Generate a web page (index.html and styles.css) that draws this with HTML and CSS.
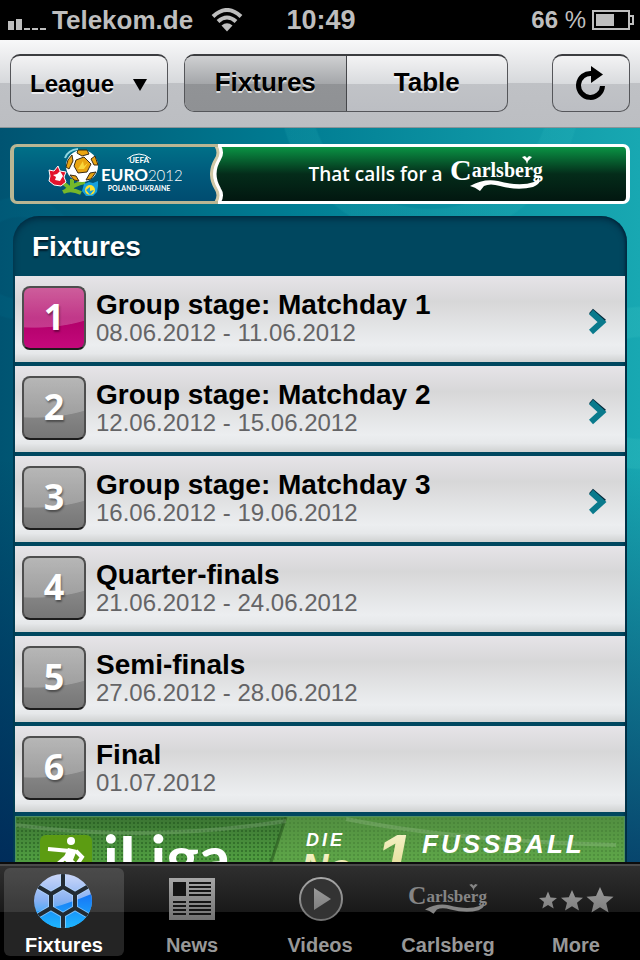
FILE: index.html
```html
<!DOCTYPE html>
<html lang="en">
<head>
  <meta charset="utf-8">
  <meta name="viewport" content="width=device-width">
  <title>Fixtures - Euro 2012</title>
  <link rel="stylesheet" href="styles.css">
</head>
<body>

  <div class="status-bar">
    <div class="carrier">
      <svg class="signal" width="38" height="12" viewBox="0 0 38 12">
        <path d="M0 3h6v9H0zM8 1h6v11H8zM16 10h6v2h-6zM24 10h6v2h-6zM32 10h6v2h-6z"/>
      </svg>
      <span>Telekom.de</span>
      <svg class="wifi" width="32" height="24" viewBox="0 0 32 24">
        <path class="arc" d="M2 8.500Q16 -4.500 30 8.500M7 13.500Q16 5.500 25 13.500"/>
        <path d="M16 23.500L10.500 17.500Q16 13 21.500 17.500Z"/>
      </svg>
    </div>
    <time>10:49</time>
    <div class="battery">
      <span>66 <span class="percent">%</span></span>
      <svg width="42" height="20" viewBox="0 0 42 20">
        <path class="shell" d="M1 1h36v18H1zM37 6h4v8h-4"/>
        <path d="M4 4h18v12H4z"/>
      </svg>
    </div>
  </div>

  <header class="toolbar">
    <div class="league">
      <select class="btn league-select" aria-label="League">
        <option>League</option>
        <option>Euro 2012</option>
      </select>
      <svg class="arrow" width="16" height="14" viewBox="0 0 16 14"><path d="M1 1h14L8 13z"/></svg>
    </div>
    <div class="segments">
      <button type="button" class="segment active">Fixtures</button>
      <button type="button" class="segment">Table</button>
    </div>
    <button type="button" class="btn refresh" aria-label="Refresh">
      <svg width="30" height="36" viewBox="0 0 30 36">
        <path class="ring" d="M16 8.500A12 12 0 1 0 26.500 21"/>
        <path d="M15 1l12 8.500L15 18z"/>
      </svg>
    </button>
  </header>

  <main class="content">
    <a href="#sponsor" class="banner">
      <span class="banner-left">
        <svg class="euro-logo" width="134" height="52" viewBox="0 0 134 52">
          <!-- flower stems -->
          <path d="M24 31L24 43M24 42L13 33M16 44Q26 36 37 34M15 44Q23 40 33 45" fill="none" stroke="#76b82a" stroke-width="4"/>
          <path d="M17 10Q20 2 30 1" fill="none" stroke="#8fd6e0" stroke-width="2"/>
          <!-- ball -->
          <circle cx="34" cy="18" r="16" fill="#fff"/>
          <path d="M28 12l8-3 7 7-4 8-9 1-4-7zM30 2l9 0 2 4-7 2-5-3zM47 8l3 9-4 0-3-6zM42 25l6-1-5 7-5 1zM20 12l4-5 1 6-4 8-3-2zM22 27l6 1 3 5-5-1z" fill="#e9a411" stroke="#3b2b14" stroke-width="1"/>
          <path d="M30 21l5-8 1 5 4-3-4 6z" fill="#f9d63c"/>
          <!-- red flower -->
          <path d="M1 22l5 1 4-5 2 5 6 1-2 5 2 5-5 4-7-1-5-4 1-5z" fill="#e3132c" stroke="#fff" stroke-width="1"/>
          <path d="M5 27l4-1 3-3 3 5-3 5-5-1 1-3z" fill="#fff"/>
          <!-- blue flower -->
          <path d="M36 36l5-2 4 1 5-2 0 5-1 6-4 4-7 0-4-5z" fill="#18a0dc"/>
          <circle cx="42" cy="42" r="5" fill="#ffe22e"/>
          <path d="M38 42l4-3 0 4 4-1-4 5z" fill="#18a0dc"/>
          <path d="M79 11Q91 1 103 11" fill="none" stroke="#fff" stroke-width="1"/>
          <text x="91" y="15" class="logo-uefa">UEFA</text>
          <text x="53" y="33" class="logo-euro">EURO<tspan class="logo-year">2012</tspan></text>
          <text x="91" y="43" class="logo-host">POLAND-UKRAINE</text>
        </svg>
      </span>
      <svg class="banner-edge" width="16" height="60" viewBox="0 0 16 60">
        <defs>
          <linearGradient id="green" x2="0" y2="1">
            <stop offset="0" stop-color="#0a9344"/>
            <stop offset=".5" stop-color="#042c1a"/>
            <stop offset="1" stop-color="#021710"/>
          </linearGradient>
          <linearGradient id="sea" x2="0" y2="1">
            <stop offset="0" stop-color="#007088"/>
            <stop offset=".5" stop-color="#005a7c"/>
            <stop offset="1" stop-color="#004c70"/>
          </linearGradient>
        </defs>
        <path d="M0 0h16v60H0z" fill="url(#sea)"/>
        <path d="M9 3Q13 9 8 15Q-1 30 8 45Q13 51 9 57H16V3Z" fill="url(#green)"/>
        <path d="M9 2Q13 9 9 15Q0 30 9 45Q13 51 9 58" fill="none" stroke="#fff" stroke-width="4"/>
        <path d="M6 2Q10 9 6 15Q-3 30 6 45Q10 51 6 58" fill="none" stroke="#d0c8a6" stroke-width="3"/>
        <path d="M0 0h8v3H0zM0 57h8v3H0z" fill="#b9b693"/>
        <path d="M8 0h8v3H8zM8 57h8v3H8z" fill="#fff"/>
      </svg>
      <span class="banner-right">
        <span>That calls for a</span>
        <svg width="94" height="38" viewBox="0 0 94 38" fill="#fff">
          <use href="#carlsberg"/>
        </svg>
      </span>
    </a>

    <section class="panel">
      <h1>Fixtures</h1>
      <ul class="rounds">
        <li>
          <a href="#matchday1" class="round">
            <span class="badge current">1</span>
            <span class="info"><strong>Group stage: Matchday 1</strong><span>08.06.2012 - 11.06.2012</span></span>
            <svg class="chevron" width="18" height="28" viewBox="0 0 18 28"><path class="shade" d="M2 3l13 11"/><path d="M2 4l11 10-11 10"/></svg>
          </a>
        </li>
        <li>
          <a href="#matchday2" class="round">
            <span class="badge">2</span>
            <span class="info"><strong>Group stage: Matchday 2</strong><span>12.06.2012 - 15.06.2012</span></span>
            <svg class="chevron" width="18" height="28" viewBox="0 0 18 28"><path class="shade" d="M2 3l13 11"/><path d="M2 4l11 10-11 10"/></svg>
          </a>
        </li>
        <li>
          <a href="#matchday3" class="round">
            <span class="badge">3</span>
            <span class="info"><strong>Group stage: Matchday 3</strong><span>16.06.2012 - 19.06.2012</span></span>
            <svg class="chevron" width="18" height="28" viewBox="0 0 18 28"><path class="shade" d="M2 3l13 11"/><path d="M2 4l11 10-11 10"/></svg>
          </a>
        </li>
        <li>
          <div class="round">
            <span class="badge">4</span>
            <span class="info"><strong>Quarter-finals</strong><span>21.06.2012 - 24.06.2012</span></span>
          </div>
        </li>
        <li>
          <div class="round">
            <span class="badge">5</span>
            <span class="info"><strong>Semi-finals</strong><span>27.06.2012 - 28.06.2012</span></span>
          </div>
        </li>
        <li>
          <div class="round">
            <span class="badge">6</span>
            <span class="info"><strong>Final</strong><span>01.07.2012</span></span>
          </div>
        </li>
      </ul>

      <a href="#iliga" class="ad">
        <svg class="ad-art" height="90" width="610" viewBox="0 0 610 90">
          <defs>
            <linearGradient id="cream" x2="0" y2="1">
              <stop offset="0" stop-color="#fbf8d4"/>
              <stop offset="1" stop-color="#d8cf7a"/>
            </linearGradient>
          </defs>
          <path d="M270 0H610V90H240z" fill="#6fb052" opacity=".45"/>
          <path d="M270 0L240 90" stroke="#28581f" stroke-width="3" opacity=".6"/>
          <path d="M0 8Q130 26 270 4M330 2Q440 24 600 28" fill="none" stroke="#fff" stroke-width="4" opacity=".13"/>
          <rect x="24" y="18" width="52" height="60" rx="6" fill="#5c9c12"/>
          <!-- player -->
          <circle cx="55" cy="24" r="4" fill="#fff"/>
          <path d="M32 32L54 34M60 34L66 40L60 49" fill="none" stroke="#fff" stroke-width="4"/>
          <path d="M52 31L61 33L57 43L64 49L58 52L47 42Z" fill="#fff"/>
          <path d="M50 40L36 52" stroke="#fff" stroke-width="4"/>
          <text x="87" y="63" class="ad-name">iLiga</text>
          <text x="290" y="29" class="ad-die">DIE</text>
          <text x="285" y="64" class="ad-no">No.</text>
          <text x="360" y="64" class="ad-one">1</text>
          <text x="406" y="36" class="ad-sport">FUSSBALL</text>
        </svg>
      </a>
    </section>
  </main>

  <nav class="tab-bar">
    <a href="#fixtures" class="tab selected">
      <svg width="60" height="60" viewBox="0 0 60 60">
        <defs>
          <linearGradient id="blue" x2="0" y2="1">
            <stop offset="0" stop-color="#d2dbfa"/>
            <stop offset=".5" stop-color="#86b0f2"/>
            <stop offset=".75" stop-color="#3ca8fa"/>
            <stop offset="1" stop-color="#20c4ff"/>
          </linearGradient>
          <linearGradient id="deep" x2="0" y2="1">
            <stop offset="0" stop-color="#1673f5"/>
            <stop offset="1" stop-color="#1ebcff"/>
          </linearGradient>
          <clipPath id="ball"><ellipse cx="29" cy="30" rx="29" ry="27"/></clipPath>
        </defs>
        <g clip-path="url(#ball)">
          <path d="M0 0h60v60H0z" fill="url(#blue)"/>
          <path d="M0 41Q28 36 60 22V60H0z" fill="url(#deep)"/>
          <path d="M29 16L41 23V37L29 44L17 37V23ZM29 16V0M41 23L60 12M41 37L60 48M29 44V60M17 37L-2 48M17 23L-2 12" fill="none" stroke="#b8dcff" stroke-width="6" opacity=".6"/>
          <path d="M29 16L41 23V37L29 44L17 37V23ZM29 16V0M41 23L60 12M41 37L60 48M29 44V60M17 37L-2 48M17 23L-2 12" fill="none" stroke="#222b33" stroke-width="4"/>
        </g>
      </svg>
      <span>Fixtures</span>
    </a>
    <a href="#news" class="tab">
      <svg width="60" height="60" viewBox="0 0 60 60">
        <defs>
          <linearGradient id="grey" gradientUnits="userSpaceOnUse" x1="0" y1="6" x2="0" y2="50">
            <stop offset="0" stop-color="#a8a8a8"/>
            <stop offset="1" stop-color="#717171"/>
          </linearGradient>
        </defs>
        <path d="M7 7h46v42H7z" fill="url(#grey)"/>
        <path d="M11 11h13v14H11zM27 11h22v2H27zM27 15h22v2H27zM27 19h22v2H27zM27 23h22v2H27zM11 30h13v2H11zM11 34h13v2H11zM11 38h13v2H11zM11 42h13v2H11zM27 30h22v2H27zM27 34h22v2H27zM27 38h22v2H27zM27 42h22v2H27z" fill="#151515"/>
      </svg>
      <span>News</span>
    </a>
    <a href="#videos" class="tab">
      <svg width="60" height="60" viewBox="0 0 60 60">
        <circle cx="31" cy="28" r="21" fill="#333" stroke="url(#grey)" stroke-width="2"/>
        <path d="M24 17L41 28L24 39z" fill="url(#grey)"/>
      </svg>
      <span>Videos</span>
    </a>
    <a href="#carlsberg-tab" class="tab">
      <svg width="80" height="60" viewBox="0 -14 94 70" fill="#858585">
        <g id="carlsberg">
          <text x="0" y="25" class="beer"><tspan class="beer-c">C</tspan><tspan dy="-3">arlsberg</tspan></text>
          <path d="M20 31Q34 23 48 26Q70 32 84 27Q88 25 88 22Q93 28 83 32Q68 36 50 31Q40 28 34 31L30 36Q25 32 20 31z"/>
          <path d="M76 6l-4-4 3-1 2 2 2-2 3 1-4 4-1 3z"/>
        </g>
      </svg>
      <span>Carlsberg</span>
    </a>
    <a href="#more" class="tab">
      <svg width="80" height="60" viewBox="0 0 80 60">
        <g fill="url(#grey)">
          <path d="M12 20.500l2.500 6 6.500.5-5 4 1.700 6.500-5.700-3.500-5.700 3.500 1.700-6.500-5-4 6.500-.5z"/>
          <path d="M36 19l3.200 7.200 7.800.6-6 5 2 7.700-7-4.300-7 4.300 2-7.700-6-5 7.800-.6z"/>
          <path d="M64 16l4 9 9.500.8-7.300 6.200 2.300 9.500-8.500-5.200-8.500 5.200 2.300-9.500-7.300-6.200 9.500-.8z"/>
        </g>
      </svg>
      <span>More</span>
    </a>
  </nav>

</body>
</html>
```
FILE: styles.css
```css
* {
  box-sizing: border-box;
}

body {
  font-family: "Liberation Sans", Arial, sans-serif;
  margin: 0;
  height: 100vh;
  display: flex;
  flex-direction: column;
  overflow: hidden;
  background: #000;
}

a {
  color: inherit;
  text-decoration: none;
}

svg {
  display: block;
  flex-shrink: 0;
}

/* Status bar */
.status-bar {
  display: grid;
  grid-template-columns: 1fr auto 1fr;
  align-items: center;
  height: 40px;
  padding: 0 6px 0 8px;
  background: #000;
  color: #bebebe;
  fill: #bebebe;
  font-size: 26px;
  font-weight: bold;
  flex-shrink: 0;
}

.status-bar time {
  font-size: 27px;
}

.carrier, .battery {
  display: flex;
  align-items: center;
  gap: 6px;
}

.signal {
  margin-top: 8px;
}

.wifi {
  margin-left: 12px;
}

.wifi .arc {
  fill: none;
  stroke: #bebebe;
  stroke-width: 4;
}

.battery {
  justify-content: flex-end;
  font-size: 24px;
}

.percent {
  font-weight: normal;
}

.battery .shell {
  fill: none;
  stroke: #bebebe;
  stroke-width: 2;
}

/* Toolbar */
.toolbar {
  display: flex;
  align-items: center;
  gap: 16px;
  height: 88px;
  padding: 0 10px 2px;
  background: linear-gradient(#f8f8f9, #d6d8db 50%, #bfc1c5 50%, #bcbec2);
  border-bottom: 1px solid #8b9498;
  flex-shrink: 0;
}

.btn, .segments {
  height: 58px;
  border: 1px solid #55565a;
  border-top: 2px solid #3c3d40;
  border-radius: 10px;
  background: linear-gradient(#f3f3f4, #d9dbde 50%, #c1c3c7 50%, #bcbec3);
  color: #000;
  font-family: inherit;
  font-weight: bold;
  text-shadow: 0 2px 0 rgba(255,255,255,0.7);
}

.league {
  position: relative;
}

.league-select {
  display: block;
  appearance: none;
  width: 158px;
  padding: 0 40px 0 19px;
  font-size: 24px;
}

/* arrow lies over the select */
.arrow {
  position: absolute;
  right: 20px;
  top: 24px;
  pointer-events: none;
}

.segments {
  display: flex;
  flex: 0 1 324px;
  overflow: hidden;
}

.segment {
  flex: 1;
  border: none;
  padding: 0 0 2px;
  background: none;
  color: inherit;
  font: bold 26px "Liberation Sans", Arial, sans-serif;
  text-shadow: inherit;
}

.segment.active {
  background: linear-gradient(#cfd0d2, #a5a7aa 50%, #919396 50%, #8f9194);
  border-right: 1px solid #45464a;
}

.refresh {
  display: flex;
  align-items: center;
  justify-content: center;
  width: 78px;
  margin-left: auto;
  padding: 0;
}

.refresh .ring {
  fill: none;
  stroke: #000;
  stroke-width: 5;
}

/* Content */
.content {
  flex: 1;
  min-height: 0;
  overflow: hidden;
  padding: 16px 10px 0;
  background:
    radial-gradient(circle at 430px -40px, transparent 120px, rgba(60,200,200,0.12) 122px, rgba(60,200,200,0.12) 150px, transparent 152px),
    radial-gradient(circle at 20px 130px, transparent 40px, rgba(0,110,140,0.2) 42px, rgba(0,110,140,0.2) 60px, transparent 62px),
    radial-gradient(circle at 640px 260px, transparent 50px, rgba(90,220,210,0.12) 52px, rgba(90,220,210,0.12) 80px, transparent 82px),
    linear-gradient(rgba(0,30,80,0) 45%, rgba(0,28,80,0.7)),
    linear-gradient(to right, #005472, #007c92 45%, #18a8b2);
}

.banner {
  display: flex;
  height: 60px;
}

.banner-left {
  flex: 0 1 200px;
  min-width: 0;
  display: flex;
  align-items: center;
  padding-left: 34px;
  border: 3px solid #b9b693;
  border-left-width: 4px;
  border-right: none;
  border-radius: 7px 0 0 7px;
  background: linear-gradient(#007088, #005a7c 50%, #004c70);
}

.banner-right {
  flex: 1;
  min-width: 0;
  display: flex;
  align-items: center;
  justify-content: center;
  gap: 7px;
  border: 3px solid #fff;
  border-right-width: 4px;
  border-left: none;
  border-radius: 0 7px 7px 0;
  background: linear-gradient(#0a9344, #042c1a 50%, #021710);
  color: #fff;
  font: 600 19px "Open Sans", sans-serif;
}

.logo-uefa, .logo-host {
  font: bold 8px Lato, sans-serif;
  fill: #fff;
  text-anchor: middle;
}

.logo-host {
  font-size: 7px;
}

.logo-euro {
  font: bold 17px Lato, sans-serif;
  fill: #fff;
}

.logo-year {
  font-weight: 300;
  font-size: 15px;
}

.beer {
  font: bold 20px "Liberation Serif", serif;
}

.beer-c {
  font-size: 30px;
}

/* Fixtures panel */
.panel {
  margin: 12px 3px 0;
  padding: 0 2px;
  border-radius: 26px 26px 0 0;
  background: #00475f;
  box-shadow: inset 0 3px 6px rgba(0,25,45,0.6), inset -2px 0 2px rgba(0,25,45,0.4);
}

.panel h1 {
  margin: 0;
  padding: 1px 17px 0;
  line-height: 59px;
  font-size: 28px;
  color: #fff;
  text-shadow: 0 2px 2px #001c2a;
}

.rounds {
  list-style: none;
  margin: 0;
  padding: 0;
}

.rounds li {
  margin-bottom: 4px;
}

.round {
  display: flex;
  align-items: center;
  gap: 10px;
  padding: 10px 18px 12px 7px;
  background: linear-gradient(#e6e4e8, #d7d7d8 30%, #eceef0 80%, #e6e8ea 90%, #cfd1d1);
}

.badge {
  width: 64px;
  height: 64px;
  border: 2px solid #4e4e4e;
  border-bottom-color: #1c1c1c;
  border-radius: 8px;
  background:
    radial-gradient(ellipse 90px 40px at 10px 0, rgba(255,255,255,0.22) 98%, transparent),
    linear-gradient(#a2a2a2, #8a8a8a 50%, #767676);
  color: #fff;
  font: bold 36px/58px "Open Sans", sans-serif;
  text-align: center;
  text-shadow: 1px 2px 2px rgba(0,0,0,0.4);
}

.badge.current {
  background:
    radial-gradient(ellipse 90px 40px at 10px 0, rgba(255,255,255,0.22) 98%, transparent),
    linear-gradient(#c0307f, #b00068 50%, #c4087c);
}

.info {
  flex: 1;
  display: flex;
  flex-direction: column;
  padding-top: 2px;
  font-size: 24px;
  line-height: 28px;
  color: #646466;
}

.info strong {
  font-size: 28px;
  color: #000;
}

.chevron {
  margin-top: 8px;
  fill: none;
  stroke: #0a7a8c;
  stroke-width: 6;
}

.chevron .shade {
  stroke: #04283a;
}

/* Ad */
.ad {
  display: block;
  overflow: hidden;
  border: 1px solid #4d8f63;
  background:
    radial-gradient(rgba(20,70,20,0.4) 1px, transparent 1px) 0 0 / 4px 4px,
    linear-gradient(#3b7432, #4f9b40 40px);
}

.ad text {
  fill: #fff;
}

.ad-name {
  font: bold 62px Lato, sans-serif;
}

.ad-die, .ad-sport {
  font: italic bold 18px "Liberation Sans", sans-serif;
  letter-spacing: 3px;
}

.ad-sport {
  font-size: 26px;
}

.ad .ad-no, .ad .ad-one {
  font: italic bold 38px "Liberation Sans", sans-serif;
  fill: url(#cream);
}

.ad .ad-one {
  font-size: 66px;
}

/* Tab bar */
.tab-bar {
  display: flex;
  height: 98px;
  padding-top: 4px;
  border-top: 2px solid #0c0c0c;
  background: linear-gradient(#4a4a4a 2px, #2f2f2f 2px, #191919 48px, #000 48px);
  flex-shrink: 0;
}

.tab {
  flex: 1;
  display: flex;
  flex-direction: column;
  align-items: center;
  margin: 0 4px 4px;
  padding-top: 3px;
  border-radius: 6px;
  color: #989898;
  font-size: 20px;
  font-weight: bold;
  line-height: 28px;
}

.tab.selected {
  background: rgba(255,255,255,0.14);
  color: #fff;
}
```
